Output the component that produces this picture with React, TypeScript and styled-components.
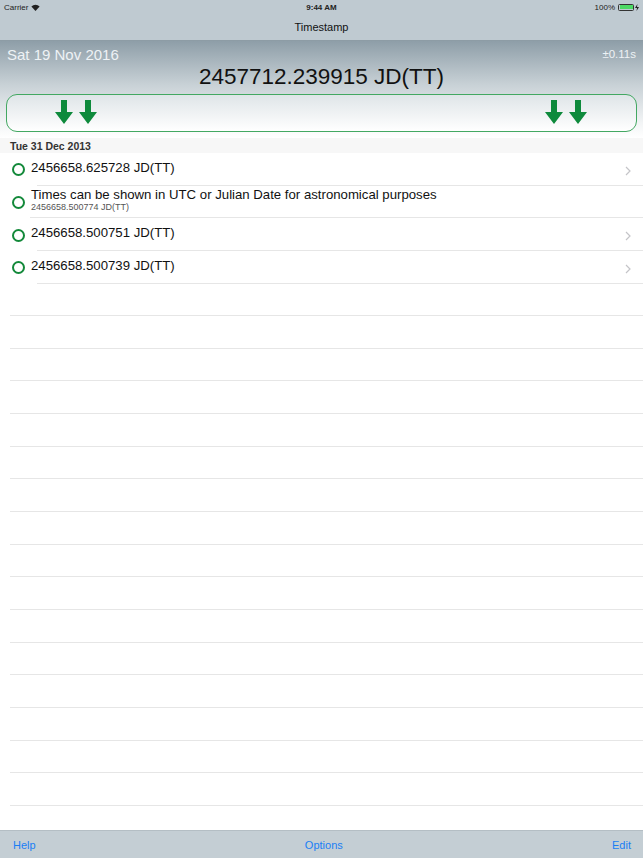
import React from "react";
import styled, { createGlobalStyle } from "styled-components";

const GlobalStyle = createGlobalStyle`
  html, body {
    margin: 0;
    padding: 0;
    background: #ffffff;
    font-family: "Liberation Sans", Arial, sans-serif;
  }
`;

type Entry = {
  title: string;
  subtitle?: string;
  chevron: boolean;
  inset: number;
};

const entries: Entry[] = [
  { title: "2456658.625728 JD(TT)", chevron: true, inset: 37 },
  {
    title: "Times can be shown in UTC or Julian Date for astronomical purposes",
    subtitle: "2456658.500774 JD(TT)",
    chevron: false,
    inset: 30,
  },
  { title: "2456658.500751 JD(TT)", chevron: true, inset: 37 },
  { title: "2456658.500739 JD(TT)", chevron: true, inset: 37 },
];

const emptyRows = Array.from({ length: 17 });

const Arrow = () => (
  <svg width="18" height="24" viewBox="0 0 18 24">
    <path d="M6 0 H12 V12 H18 L9 24 L0 12 H6 Z" fill="#0e8a3c" />
  </svg>
);

const Chevron = () => (
  <svg width="6" height="10" viewBox="0 0 6 10">
    <path d="M1 1 L5 5 L1 9" fill="none" stroke="#c4c4c8" strokeWidth="1.2" />
  </svg>
);

const App = () => {
  return (
    <Page>
      <GlobalStyle />
      <TopBar>
        <StatusBar>
          <StatusLeft>
            Carrier
            <svg width="9" height="7" viewBox="0 0 12 9">
              <path d="M6 9 L0.5 3 A8 8 0 0 1 11.5 3 Z" fill="#222" />
            </svg>
          </StatusLeft>
          <StatusTime>9:44 AM</StatusTime>
          <StatusRight>
            100%
            <Battery>
              <BatteryFill />
            </Battery>
            <svg width="4" height="7" viewBox="0 0 4 7">
              <path d="M2.5 0 L0 4 H2 L1.5 7 L4 3 H2 Z" fill="#222" />
            </svg>
          </StatusRight>
        </StatusBar>
        <NavTitle>Timestamp</NavTitle>
      </TopBar>

      <Header>
        <HeaderLine>
          <DateText>Sat 19 Nov 2016</DateText>
          <Accuracy>±0.11s</Accuracy>
        </HeaderLine>
        <BigTime>2457712.239915 JD(TT)</BigTime>
        <StampBox>
          <ArrowPair>
            <Arrow />
            <Arrow />
          </ArrowPair>
          <ArrowPair>
            <Arrow />
            <Arrow />
          </ArrowPair>
        </StampBox>
      </Header>

      <List>
        <SectionHeader>Tue 31 Dec 2013</SectionHeader>
        {entries.map((e, i) => (
          <Row key={i} $inset={e.inset}>
            <Ring />
            <RowText>
              <RowTitle>{e.title}</RowTitle>
              {e.subtitle && <RowSub>{e.subtitle}</RowSub>}
            </RowText>
            {e.chevron && (
              <ChevronWrap>
                <Chevron />
              </ChevronWrap>
            )}
          </Row>
        ))}
        {emptyRows.map((_, i) => (
          <Row key={"e" + i} $inset={10} />
        ))}
      </List>

      <Toolbar>
        <ToolButton>Help</ToolButton>
        <ToolButton>Options</ToolButton>
        <ToolButton>Edit</ToolButton>
      </Toolbar>
    </Page>
  );
};

const Page = styled.div`
  width: 643px;
  height: 858px;
  display: flex;
  flex-direction: column;
  overflow: hidden;
  background: #ffffff;
`;

const TopBar = styled.div`
  background: #bfcad1;
  height: 40px;
  display: flex;
  flex-direction: column;
`;

const StatusBar = styled.div`
  height: 14px;
  display: grid;
  grid-template-columns: 1fr auto 1fr;
  align-items: center;
  padding: 0 4px;
  font-size: 8px;
  color: #222;
`;

const StatusLeft = styled.div`
  display: flex;
  align-items: center;
  gap: 3px;
`;

const StatusTime = styled.div`
  font-weight: bold;
  text-align: center;
`;

const StatusRight = styled.div`
  display: flex;
  align-items: center;
  justify-content: flex-end;
  gap: 1px;
`;

const Battery = styled.div`
  width: 16px;
  height: 7px;
  border: 1px solid #333;
  border-radius: 1.5px;
  padding: 0.5px;
  margin-left: 2px;
  box-sizing: border-box;
  display: flex;
`;

const BatteryFill = styled.div`
  flex: 1;
  background: #4cd964;
`;

const NavTitle = styled.div`
  flex: 1;
  display: flex;
  align-items: center;
  justify-content: center;
  font-size: 11px;
  color: #111;
  padding-bottom: 1px;
`;

const Header = styled.div`
  height: 98px;
  flex-shrink: 0;
  box-sizing: border-box;
  border-top: 1px solid #8d9ca5;
  background: linear-gradient(to bottom, #8e9ea8 0%, #c8d1d6 45%, #f3f5f6 85%, #ffffff 100%);
  padding: 4px 6px 0 6px;
  display: flex;
  flex-direction: column;
`;

const HeaderLine = styled.div`
  display: flex;
  justify-content: space-between;
  align-items: center;
  height: 18px;
`;

const DateText = styled.div`
  font-size: 15px;
  color: #eef2f5;
  padding-left: 1px;
`;

const Accuracy = styled.div`
  font-size: 11.5px;
  color: #eef2f5;
  padding-right: 1px;
`;

const BigTime = styled.div`
  text-align: center;
  font-size: 22.5px;
  color: #111;
  height: 28px;
  line-height: 28px;
`;

const StampBox = styled.div`
  margin-top: 3px;
  height: 38px;
  box-sizing: border-box;
  border: 1px solid #43a862;
  border-radius: 11px;
  background: linear-gradient(to bottom, #dfe5e8, #ffffff);
  display: flex;
  justify-content: space-between;
  align-items: center;
  padding: 0 49px 0 48px;
`;

const ArrowPair = styled.div`
  display: flex;
  gap: 6px;
  padding-bottom: 2px;
`;

const List = styled.div`
  flex: 1;
  overflow: hidden;
  display: flex;
  flex-direction: column;
`;

const SectionHeader = styled.div`
  flex: 0 0 15px;
  background: #f7f7f7;
  font-size: 10.5px;
  font-weight: bold;
  color: #333;
  padding-left: 10px;
  display: flex;
  align-items: center;
`;

const Row = styled.div<{ $inset: number }>`
  position: relative;
  flex: 0 0 32.65px;
  box-sizing: border-box;
  display: flex;
  align-items: center;
  padding: 0 12px 0 12px;
  &::after {
    content: "";
    position: absolute;
    left: ${(p) => p.$inset}px;
    right: 0;
    bottom: 0;
    height: 1px;
    background: #e6e6e6;
  }
`;

const Ring = styled.div`
  width: 13px;
  height: 13px;
  box-sizing: border-box;
  border: 2.5px solid #13893a;
  border-radius: 50%;
  margin-top: 1px;
  flex-shrink: 0;
`;

const RowText = styled.div`
  flex: 1;
  display: flex;
  flex-direction: column;
  padding-left: 6px;
  margin-top: -4px;
`;

const RowTitle = styled.div`
  font-size: 13.2px;
  color: #111;
  line-height: 15px;
`;

const RowSub = styled.div`
  font-size: 9px;
  color: #555;
  line-height: 11px;
`;

const ChevronWrap = styled.div`
  display: flex;
  align-items: center;
  margin-top: 3px;
`;

const Toolbar = styled.div`
  height: 28px;
  flex-shrink: 0;
  box-sizing: border-box;
  border-top: 1px solid #b4bec4;
  background: #c4ced4;
  display: flex;
  justify-content: space-between;
  align-items: center;
  padding: 0 12px 0 13px;
`;

const ToolButton = styled.div`
  font-size: 11px;
  color: #1a7ef5;
`;

export default App;
